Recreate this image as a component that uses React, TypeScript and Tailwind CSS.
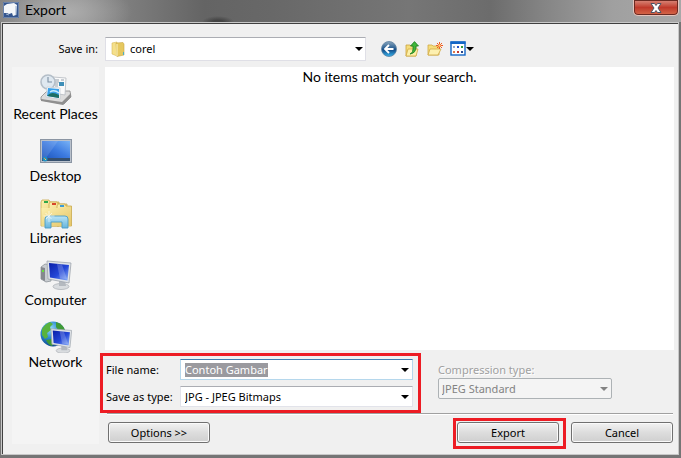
import { useState } from "react";
import type { ReactNode } from "react";

const RecentIcon = () => (
  <svg viewBox="0 0 32 32" className="h-8 w-8">
    <path d="M1 24 L7 18 H30 L31 24 L24 31 L1 27Z" fill="#dcdcdc" stroke="#8c8c8c" strokeWidth=".8" />
    <path d="M1 26 L22 29 L31 20 V24 L23 32 L1 28Z" fill="#8f8f8f" />
    <path d="M13 4 L26 5 L25 22 L13 20Z" fill="#fafafa" stroke="#b5bac0" strokeWidth=".8" />
    <path d="M15 7h4M15 9h4M15 11h3M21 7h3M15 13h3" stroke="#8b96a3" strokeWidth=".9" />
    <path d="M19 9h5v4h-5z" fill="#3f8fb8" />
    <circle cx="8" cy="9" r="7" fill="#dfe8f0" stroke="#b4bec8" strokeWidth="1.6" />
    <path d="M8 4v5h4" fill="none" stroke="#7c8fa3" strokeWidth="1.1" />
    <path d="M7 14 L20 15 L20 26 L6 24Z" fill="#fff" stroke="#b9c3cc" strokeWidth=".6" />
    <path d="M8 15 L19 16 V25 L7 23Z" fill="#3aa0e8" />
    <path d="M8 22 Q12 18 19 22 V25 L7 23Z" fill="#1c6e63" />
    <path d="M10 19 Q14 16 19 20" stroke="#c8ecfb" strokeWidth="1.5" fill="none" />
  </svg>
);

const DesktopIcon = () => (
  <svg viewBox="0 0 32 32" className="h-8 w-8">
    <defs>
      <linearGradient id="desk" x1="0" y1="1" x2="1" y2="0">
        <stop offset="0" stopColor="#1c55bd" />
        <stop offset=".5" stopColor="#3d7be0" />
        <stop offset="1" stopColor="#78b2f6" />
      </linearGradient>
    </defs>
    <rect x=".5" y="4.500" width="31" height="23" fill="#b9c1cc" stroke="#8b95a3" />
    <rect x="2" y="6" width="28" height="17" fill="url(#desk)" />
    <path d="M2 6H18L6 23H2Z" fill="#fff" opacity=".12" />
    <rect x="2" y="23" width="28" height="3" fill="#36506e" />
    <circle cx="5" cy="24" r="2.500" fill="#1f8fc0" />
    <path d="M4 23h1v1H4z" fill="#f08a3c" />
    <path d="M5 24h1v1H5z" fill="#f4de57" />
  </svg>
);

const LibrariesIcon = () => (
  <svg viewBox="0 0 32 32" className="h-8 w-8">
    <defs>
      <linearGradient id="lib" x1="0" y1="0" x2="1" y2="1">
        <stop offset="0" stopColor="#fbefae" />
        <stop offset="1" stopColor="#e5c567" />
      </linearGradient>
      <linearGradient id="stand" x1="0" y1="0" x2="0" y2="1">
        <stop offset="0" stopColor="#b9e4f6" />
        <stop offset="1" stopColor="#66b4dc" />
      </linearGradient>
    </defs>
    <path d="M1 5 L2 3H9L10 5H19V29H1Z" fill="url(#lib)" stroke="#c9a94c" strokeWidth=".8" />
    <path d="M9 7 L10 5H17L18 7H27V29H9Z" fill="url(#lib)" stroke="#c9a94c" strokeWidth=".8" />
    <path d="M17 9 L18 7H25L26 9H31.500V29H17Z" fill="url(#lib)" stroke="#c9a94c" strokeWidth=".8" />
    <path d="M1.500 11H31V29H1.500Z" fill="url(#lib)" />
    <path d="M4 4h4v2H4z" fill="#2fa84a" />
    <path d="M12 6h4v2h-4z" fill="#d8452c" />
    <path d="M20 8h4v2h-4z" fill="#3b9bd8" />
    <path d="M5 31V22Q5 19 8 19H25Q28 19 28 22V31H22V25H11V31Z" fill="url(#stand)" stroke="#4a9cc6" strokeWidth=".9" />
    <path d="M9 14v11M3.500 19h11M5.500 16l6 6M12 16l-6 6" stroke="#fff" strokeWidth=".6" />
  </svg>
);

const Screen = ({ id }: { id: string }) => (
  <>
    <defs>
      <linearGradient id={id} x1="0" y1="0" x2="1" y2="1">
        <stop offset="0" stopColor="#0a1fa8" />
        <stop offset=".55" stopColor="#2448d8" />
        <stop offset="1" stopColor="#8fb4fa" />
      </linearGradient>
    </defs>
    <ellipse cx="21" cy="27.500" rx="8" ry="3" fill="#d9dcdf" stroke="#a6abb0" strokeWidth=".7" />
    <path d="M19 22h6l1 5h-7z" fill="#b4b9bf" />
    <path d="M7 2 L31 4 L29 24 L8 20Z" fill="#dfe3e7" stroke="#9ea5ad" strokeWidth=".8" />
    <path d="M9 4 L29 6 L27.500 21.500 L10 18.500Z" fill={`url(#${id})`} />
    <path d="M17 5 L22 5.400 L27 20 L20 19.500Z" fill="#fff" opacity=".2" />
  </>
);

const ComputerIcon = () => (
  <svg viewBox="0 0 32 32" className="h-8 w-8">
    <path d="M1 8 L5 5 L11 6 V22 L6 23 L1 20Z" fill="#c9cdd1" stroke="#8c9298" strokeWidth=".8" />
    <path d="M1 8 L5 9 V22 L1 20Z" fill="#85898e" />
    <path d="M2 11h2v2H2z" fill="#69e03c" />
    <Screen id="computer" />
  </svg>
);

const NetworkIcon = () => (
  <svg viewBox="0 0 32 32" className="h-8 w-8">
    <defs>
      <radialGradient id="globe" cx=".4" cy=".3" r=".7">
        <stop offset="0" stopColor="#9be1fb" />
        <stop offset=".5" stopColor="#2f8bd0" />
        <stop offset="1" stopColor="#0c4a91" />
      </radialGradient>
    </defs>
    <circle cx="13" cy="13" r="12.500" fill="url(#globe)" />
    <path d="M2 8 Q5 3 10 1 L13 3 L10 6 L11 9 L7 12 L8 16 L5 18 L2 14Z" fill="#58b33d" />
    <path d="M16 1 Q23 3 25 9 L19 10 L16 6Z" fill="#3f9b35" />
    <path d="M6 19 L12 18 L15 21 L12 25 Q8 24 6 19Z" fill="#3f9b35" />
    <g transform="translate(5 6) scale(.86)">
      <Screen id="network" />
    </g>
  </svg>
);

const FolderIcon = () => (
  <svg viewBox="0 0 14 16" className="h-4 w-3.5">
    <path d="M1 2 L6 1 V15 L1 13Z" fill="#f5e08a" stroke="#d6b858" strokeWidth=".6" />
    <path d="M5 2 L12 1.500 L13 3 V14 L6 15.500Z" fill="#e6c85f" stroke="#c9a748" strokeWidth=".6" />
    <path d="M6 3v12" stroke="#fff6c4" />
    <path d="M12 11h1v3h-1z" fill="#4cafc4" />
  </svg>
);

const BackIcon = () => (
  <svg viewBox="0 0 16 16" className="h-4 w-4">
    <defs>
      <linearGradient id="back" x1="0" y1="0" x2="0" y2="1">
        <stop offset="0" stopColor="#8aa6bd" />
        <stop offset=".45" stopColor="#2a5f93" />
        <stop offset=".55" stopColor="#124a86" />
        <stop offset="1" stopColor="#37b4ee" />
      </linearGradient>
    </defs>
    <circle cx="8" cy="8" r="7.500" fill="url(#back)" stroke="#5b7f9f" strokeWidth=".8" />
    <path d="M8 4 L4 8 L8 12 M4 8H12.500" fill="none" stroke="#fff" strokeWidth="1.800" />
  </svg>
);

const UpIcon = () => (
  <svg viewBox="0 0 16 16" className="h-4 w-4">
    <path d="M2 4h4l1 1h5v10H2z" fill="#f5dd7c" stroke="#c9a23f" strokeWidth=".8" />
    <path d="M2 15 L4 8H14L12 15Z" fill="#fdf0a8" stroke="#d0a944" strokeWidth=".8" />
    <path d="M6 13 Q9.500 12 9 5H6.500L10.500 .6L14.500 5H12Q12.500 12 6 13Z" fill="#3fb53a" stroke="#1b7d1f" strokeWidth=".8" />
  </svg>
);

const NewFolderIcon = () => (
  <svg viewBox="0 0 16 16" className="h-4 w-4">
    <path d="M1 4h4l1 1h6v9H1z" fill="#f5dd7c" stroke="#d0a944" strokeWidth=".8" />
    <path d="M1 14 L3 8H14L11 14Z" fill="#fdf0b0" stroke="#d0a944" strokeWidth=".8" />
    <path d="M12.500 1v7M9 4.500h7M10 2l5 5M15 2l-5 5" stroke="#ee5a24" />
    <circle cx="12.500" cy="4.500" r="1.200" fill="#ffd27a" />
  </svg>
);

const ViewIcon = () => (
  <svg viewBox="0 0 16 16" className="h-4 w-4">
    <rect x="1" y="1" width="14" height="13" fill="#fff" stroke="#1467c6" strokeWidth="1.400" />
    <path d="M.5 .5h15v2.500H.5z" fill="#1467c6" />
    <path d="M3 5h2v2H3z" fill="#8fa9c8" />
    <path d="M7 5h2v2H7z" fill="#2b57c8" />
    <path d="M11 5h2v2h-2z" fill="#2f9a3a" />
    <path d="M3 10h2v2H3z" fill="#e07a4a" />
    <path d="M7 10h2v2H7z" fill="#c43a32" />
    <path d="M11 10h2v2h-2z" fill="#27468c" />
  </svg>
);

const Arrow = ({ className = "" }: { className?: string }) => (
  <svg viewBox="0 0 8 4" className={`h-1 w-2 ${className}`}>
    <path d="M0 0h8L4 4z" fill="currentColor" />
  </svg>
);

const places: { name: string; icon: ReactNode }[] = [
  { name: "Recent Places", icon: <RecentIcon /> },
  { name: "Desktop", icon: <DesktopIcon /> },
  { name: "Libraries", icon: <LibrariesIcon /> },
  { name: "Computer", icon: <ComputerIcon /> },
  { name: "Network", icon: <NetworkIcon /> },
];

const buttonStyle =
  "h-[21px] w-[102px] rounded-[3px] border border-[#707070] bg-linear-to-b from-[#f2f2f2] from-0% via-[#dddddd] via-50% to-[#cfcfcf] text-center leading-4 shadow-[inset_0_0_0_1px_#fafafa]";

const TitleBar = () => (
  <header className="flex h-[22px] items-start justify-between bg-[radial-gradient(ellipse_16px_6px_at_218px_22px,#444_30%,transparent),radial-gradient(ellipse_70px_30px_at_62px_12px,#b0b0b0,transparent),linear-gradient(90deg,#828282,#8d8d8d_12%,#646464_30%,#686868_40%,#767676_60%,#6c6c6c_72%,#858585_80%,#a0a0a0_90%,#a8a8a8)] pr-0.5 pl-[3px]">
    <div className="flex items-center gap-1.5 pt-0.5">
      <svg viewBox="0 0 16 16" className="h-4 w-4">
        <path d="M0 0h16v16H0z" fill="#35568e" />
        <path d="M1 4 L4 2 L11 1 L14 3 L13 13 L10 14 L9 11 L6 12 L4 11 L1 11Z" fill="#f4f7fa" />
        <path d="M13 4v9M3 12l3 1" stroke="#9eb3cf" />
        <path d="M.5 .5h15v15H.5z" fill="none" stroke="#6b84ac" />
      </svg>
      <h1 className="font-['Lato',sans-serif] text-sm leading-4">Export</h1>
    </div>
    <button
      aria-label="Close"
      className="flex h-4 w-[46px] items-center justify-center rounded-b-[5px] border border-t-0 border-[#e5c4bc] bg-linear-to-b from-[#d9897c] from-0% via-[#c0392b] via-50% to-[#d5694a] shadow-[inset_0_0_0_1px_#6b2a22]"
    >
      <svg viewBox="0 0 12 10" className="h-2.5 w-3">
        <path
          d="M1 .5h3.500L6 2.500 7.500 .5H11L8 5l3 4.500H7.500L6 7.500 4.500 9.500H1L4 5z"
          fill="#fff"
          stroke="#4c5566"
        />
      </svg>
    </button>
  </header>
);

const App = () => {
  const [fileName, setFileName] = useState("Contoh Gambar");

  return (
    <div className="flex min-h-screen flex-col bg-[#757575] font-['Noto_Sans','Liberation_Sans',sans-serif] text-[11px] leading-4 text-black">
      <TitleBar />
      <div className="mr-0.5 mb-[3px] ml-px flex flex-1 flex-col border border-[#c8c8c8]">
        <main className="flex flex-1 flex-col border-t border-l border-[#404040] bg-[#f0f0f0] pr-1 pb-2.5 pl-[9px]">
          <div className="flex h-[43px] items-center pt-[7px]">
            <label htmlFor="folder" className="w-[86px] text-right">
              Save in:
            </label>
            <div className="ml-[7px] grid max-w-[261px] flex-1 items-center">
              <select
                id="folder"
                className="col-start-1 row-start-1 h-6 appearance-none border border-[#dfdfe6] border-t-[#abadb3] bg-white pl-6"
              >
                <option>corel</option>
              </select>
              <div className="pointer-events-none col-start-1 row-start-1 flex items-center justify-between pr-[3px] pl-1.5">
                <FolderIcon />
                <Arrow />
              </div>
            </div>
            <div className="ml-[15px] flex items-center gap-[7px]">
              <button aria-label="Back"><BackIcon /></button>
              <button aria-label="Up one level"><UpIcon /></button>
              <button aria-label="New folder"><NewFolderIcon /></button>
              <button aria-label="View" className="flex items-center">
                <ViewIcon />
                <Arrow />
              </button>
            </div>
          </div>

          <div className="flex flex-1">
            <nav className="flex w-[87px] shrink-0 flex-col gap-[13px] bg-[#f4f4f4] pt-1.5 font-['Lato',sans-serif] text-sm leading-[17px]">
              {places.map((place) => (
                <button key={place.name} className="flex flex-col items-center whitespace-nowrap">
                  {place.icon}
                  {place.name}
                </button>
              ))}
            </nav>

            <div className="flex flex-1 flex-col pl-px">
              <div className="ml-[5px] min-h-[200px] flex-1 bg-white pt-px text-center font-['Lato',sans-serif] text-sm leading-[18px]">
                No items match your search.
              </div>

              <div className="mt-[3px] flex justify-between">
                <div className="flex w-[321px] shrink-0 flex-col gap-1.5 border-3 border-[#ed1c24] py-[3px] pr-[5px] pl-[3px]">
                  <div className="flex items-center">
                    <label htmlFor="file-name" className="w-[74px] whitespace-nowrap">
                      File name:
                    </label>
                    <div className="flex h-[21px] flex-1 items-center justify-between border border-[#b5d7ec] border-t-[#3d7bad] bg-white pr-[3px] pl-1">
                      <input
                        id="file-name"
                        value={fileName}
                        onChange={(e) => setFileName(e.target.value)}
                        className="field-sizing-content h-3.5 bg-[#9a9a9f] text-white outline-none"
                      />
                      <Arrow />
                    </div>
                  </div>
                  <div className="flex items-center">
                    <label htmlFor="file-type" className="w-[74px] whitespace-nowrap">
                      Save as type:
                    </label>
                    <div className="grid flex-1 items-center">
                      <select
                        id="file-type"
                        className="col-start-1 row-start-1 h-[21px] appearance-none border border-[#e2e3ea] border-t-[#abadb3] bg-white pl-1"
                      >
                        <option>JPG - JPEG Bitmaps</option>
                      </select>
                      <Arrow className="pointer-events-none col-start-1 row-start-1 mr-1 justify-self-end" />
                    </div>
                  </div>
                </div>

                <div className="mr-[62px] w-[174px] pt-2 text-[#a0a0a0]">
                  <label htmlFor="compression" className="block leading-[17px] text-shadow-[1px_1px_0_#fff]">
                    Compression type:
                  </label>
                  <div className="grid items-center text-[#838383]">
                    <select
                      id="compression"
                      disabled
                      className="col-start-1 row-start-1 h-[21px] appearance-none rounded-[2px] border border-[#adb2b5] bg-[#f4f4f4] pl-[3px] opacity-100"
                    >
                      <option>JPEG Standard</option>
                    </select>
                    <Arrow className="pointer-events-none col-start-1 row-start-1 mr-1 justify-self-end" />
                  </div>
                </div>
              </div>

              <hr className="mr-px ml-[7px] border-t border-b border-t-[#a0a0a0] border-b-white" />

              <div className="mt-[3px] mr-px -mb-[5px] flex items-start">
                <button className={`${buttonStyle} mt-1 mr-auto ml-2`}>Options &gt;&gt;</button>
                <div className="mr-[5px] border-3 border-[#ed1c24] pt-px pr-1 pb-[3px] pl-px">
                  <button className={`${buttonStyle} block`}>Export</button>
                </div>
                <button className={`${buttonStyle} mt-1`}>Cancel</button>
              </div>
            </div>
          </div>
        </main>
      </div>
    </div>
  );
};

export default App;
